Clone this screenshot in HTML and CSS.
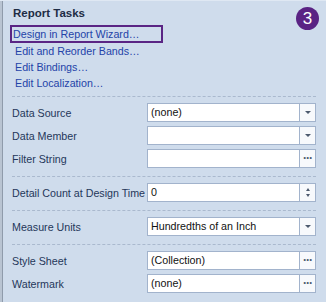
FILE: index.html
```html
<!DOCTYPE html>
<html>
<head>
<meta charset="utf-8">
<link rel="stylesheet" href="styles.css">
</head>
<body>
<div class="panel">
  <div class="gutter"></div>
  <div class="content">
    <div class="title">Report Tasks</div>
    <div class="links">
      <a class="link selected">Design in Report Wizard…</a>
      <a class="link">Edit and Reorder Bands…</a>
      <a class="link">Edit Bindings…</a>
      <a class="link">Edit Localization…</a>
    </div>
    <div class="sep first"></div>
    <div class="section">
      <div class="row">
        <span class="label">Data Source</span>
        <div class="editor"><span class="value">(none)</span><span class="btn"><span class="arrow"></span></span></div>
      </div>
      <div class="row">
        <span class="label">Data Member</span>
        <div class="editor"><span class="value"></span><span class="btn"><span class="arrow"></span></span></div>
      </div>
      <div class="row">
        <span class="label">Filter String</span>
        <div class="editor"><span class="value"></span><span class="btn dots">···</span></div>
      </div>
    </div>
    <div class="sep"></div>
    <div class="section">
      <div class="row">
        <span class="label">Detail Count at Design Time</span>
        <div class="editor"><span class="value">0</span><span class="btn spin"><span class="up"></span><span class="down"></span></span></div>
      </div>
    </div>
    <div class="sep"></div>
    <div class="section">
      <div class="row">
        <span class="label">Measure Units</span>
        <div class="editor"><span class="value">Hundredths of an Inch</span><span class="btn"><span class="arrow"></span></span></div>
      </div>
    </div>
    <div class="sep"></div>
    <div class="section">
      <div class="row">
        <span class="label">Style Sheet</span>
        <div class="editor"><span class="value">(Collection)</span><span class="btn dots">···</span></div>
      </div>
      <div class="row">
        <span class="label">Watermark</span>
        <div class="editor"><span class="value">(none)</span><span class="btn dots">···</span></div>
      </div>
    </div>
  </div>
  <div class="badge">3</div>
</div>
</body>
</html>
```
FILE: styles.css
```css
html, body {
  margin: 0;
  padding: 0;
}
body {
  width: 326px;
  height: 302px;
  overflow: hidden;
  background: #cfdcec;
  font-family: "Liberation Sans", Arial, sans-serif;
  font-size: 10.7px;
}
.panel {
  position: relative;
  display: flex;
  height: 302px;
  border-top: 1px solid #dfe8f3;
  box-sizing: border-box;
}
.gutter {
  width: 2px;
  background: #b9c4d2;
  border-right: 1px solid #8f9bab;
  flex: none;
}
.content {
  flex: 1;
  display: flex;
  flex-direction: column;
  padding: 0 10px 0 9px;
}
.title {
  font-weight: bold;
  color: #1e2c45;
  font-size: 11.5px;
  line-height: 16px;
  padding-top: 4px;
  height: 16px;
  margin-left: 1px;
}
.links {
  display: flex;
  flex-direction: column;
  margin-top: 4px;
}
.link {
  color: #2443a8;
  line-height: 16px;
  height: 16px;
  padding-left: 3px;
  white-space: nowrap;
}
.link.selected {
  align-self: flex-start;
  border: 2px solid #5a2584;
  padding: 0 21px 0 1px;
  margin-left: -2px;
  line-height: 14px;
  height: 14px;
}
.sep {
  height: 0;
  border-top: 1px dashed #aab9ce;
}
.sep.first {
  margin-top: 5px;
}
.section {
  display: flex;
  flex-direction: column;
  gap: 4px;
  padding: 6px 0 8px;
}
.row {
  display: flex;
  align-items: center;
  height: 19px;
}
.label {
  width: 135px;
  flex: none;
  color: #25375a;
  white-space: nowrap;
}
.editor {
  flex: 1;
  height: 19px;
  box-sizing: border-box;
  border: 1px solid #a2b3cc;
  background: #ffffff;
  display: flex;
}
.value {
  flex: 1;
  line-height: 17px;
  padding-left: 3px;
  color: #111;
  white-space: nowrap;
  overflow: hidden;
}
.btn {
  width: 15px;
  flex: none;
  border-left: 1px solid #a2b3cc;
  background: #f7f9fc;
  display: flex;
  align-items: center;
  justify-content: center;
}
.arrow {
  width: 0;
  height: 0;
  border-left: 3px solid transparent;
  border-right: 3px solid transparent;
  border-top: 3px solid #4d5a6e;
}
.dots {
  color: #4d5a6e;
  font-size: 12px;
  font-weight: bold;
  letter-spacing: -1px;
  line-height: 17px;
}
.spin {
  flex-direction: column;
  gap: 3px;
}
.up {
  width: 0;
  height: 0;
  border-left: 2px solid transparent;
  border-right: 2px solid transparent;
  border-bottom: 3px solid #4d5a6e;
}
.down {
  width: 0;
  height: 0;
  border-left: 2px solid transparent;
  border-right: 2px solid transparent;
  border-top: 3px solid #4d5a6e;
}
.badge {
  position: absolute;
  top: 6px;
  right: 7px;
  width: 23px;
  height: 23px;
  border-radius: 50%;
  background: #5a2384;
  color: #fff;
  font-size: 17px;
  line-height: 23px;
  text-align: center;
}
```
